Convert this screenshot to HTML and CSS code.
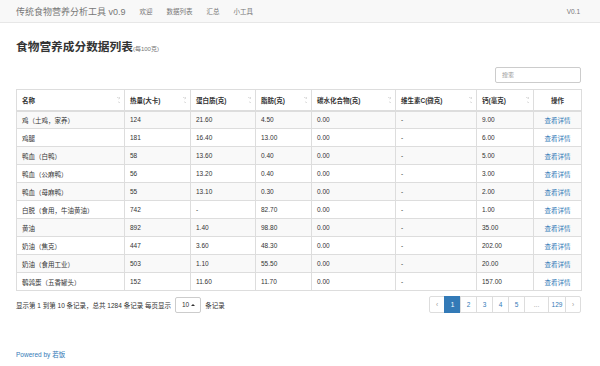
FILE: index.html
```html
<!DOCTYPE html>
<html lang="zh">
<head>
<meta charset="utf-8">
<title>传统食物营养分析工具</title>
<link rel="stylesheet" href="styles.css">
</head>
<body>
<nav class="navbar">
  <div class="nav-left">
    <span class="brand">传统食物营养分析工具 v0.9</span>
    <a class="nav-link">欢迎</a>
    <a class="nav-link">数据列表</a>
    <a class="nav-link">汇总</a>
    <a class="nav-link">小工具</a>
  </div>
  <span class="nav-link version">V0.1</span>
</nav>
<main class="container">
  <h1 class="title">食物营养成分数据列表<small>(每100克)</small></h1>
  <div class="toolbar">
    <div class="search">搜索</div>
  </div>
  <table class="data">
    <colgroup>
      <col style="width:108px"><col style="width:66px"><col style="width:65px"><col style="width:56px">
      <col style="width:84px"><col style="width:81px"><col style="width:57px"><col style="width:48px">
    </colgroup>
    <thead>
      <tr>
        <th><span>名称</span><i class="sort"></i></th>
        <th><span>热量(大卡)</span><i class="sort"></i></th>
        <th><span>蛋白质(克)</span><i class="sort"></i></th>
        <th><span>脂肪(克)</span><i class="sort"></i></th>
        <th><span>碳水化合物(克)</span><i class="sort"></i></th>
        <th><span>维生素C(微克)</span><i class="sort"></i></th>
        <th><span>钙(毫克)</span><i class="sort"></i></th>
        <th class="center">操作</th>
      </tr>
    </thead>
    <tbody>
      <tr><td>鸡（土鸡，家养）</td><td>124</td><td>21.60</td><td>4.50</td><td>0.00</td><td>-</td><td>9.00</td><td class="center"><a>查看详情</a></td></tr>
      <tr><td>鸡腿</td><td>181</td><td>16.40</td><td>13.00</td><td>0.00</td><td>-</td><td>6.00</td><td class="center"><a>查看详情</a></td></tr>
      <tr><td>鸭血（白鸭）</td><td>58</td><td>13.60</td><td>0.40</td><td>0.00</td><td>-</td><td>5.00</td><td class="center"><a>查看详情</a></td></tr>
      <tr><td>鸭血（公麻鸭）</td><td>56</td><td>13.20</td><td>0.40</td><td>0.00</td><td>-</td><td>3.00</td><td class="center"><a>查看详情</a></td></tr>
      <tr><td>鸭血（母麻鸭）</td><td>55</td><td>13.10</td><td>0.30</td><td>0.00</td><td>-</td><td>2.00</td><td class="center"><a>查看详情</a></td></tr>
      <tr><td>白脱（食用，牛油黄油）</td><td>742</td><td>-</td><td>82.70</td><td>0.00</td><td>-</td><td>1.00</td><td class="center"><a>查看详情</a></td></tr>
      <tr><td>黄油</td><td>892</td><td>1.40</td><td>98.80</td><td>0.00</td><td>-</td><td>35.00</td><td class="center"><a>查看详情</a></td></tr>
      <tr><td>奶油（焦克）</td><td>447</td><td>3.60</td><td>48.30</td><td>0.00</td><td>-</td><td>202.00</td><td class="center"><a>查看详情</a></td></tr>
      <tr><td>奶油（食用工业）</td><td>503</td><td>1.10</td><td>55.50</td><td>0.00</td><td>-</td><td>20.00</td><td class="center"><a>查看详情</a></td></tr>
      <tr><td>鹌鹑蛋（五香罐头）</td><td>152</td><td>11.60</td><td>11.70</td><td>0.00</td><td>-</td><td>157.00</td><td class="center"><a>查看详情</a></td></tr>
    </tbody>
  </table>
  <div class="pager-row">
    <div class="summary">
      <span>显示第 1 到第 10 条记录，总共 1284 条记录 每页显示</span>
      <span class="size-btn">10 <i class="caret"></i></span>
      <span>条记录</span>
    </div>
    <ul class="pagination">
      <li class="edge">‹</li>
      <li class="active">1</li>
      <li>2</li>
      <li>3</li>
      <li>4</li>
      <li>5</li>
      <li class="dots">...</li>
      <li class="wide">129</li>
      <li class="edge">›</li>
    </ul>
  </div>
  <footer class="footer"><a>Powered by 若饭</a></footer>
</main>
</body>
</html>
```
FILE: styles.css
```css
* { box-sizing: border-box; }
html, body { margin: 0; padding: 0; }
body {
  font-family: "Liberation Sans", Arial, "Noto Sans CJK SC", sans-serif;
  font-size: 6.5px;
  color: #333;
  background: #fff;
  width: 600px;
}
a { color: #337ab7; text-decoration: none; }

.navbar {
  height: 23px;
  background: #f8f8f8;
  border-bottom: 1px solid #e7e7e7;
  display: flex;
  align-items: center;
  justify-content: space-between;
  padding: 0 20px 0 16px;
}
.nav-left { display: flex; align-items: center; }
.brand { font-size: 9px; color: #777; padding-right: 7px; }
.nav-link { color: #777; padding: 0 7px; font-size: 6.5px; }
.version { padding: 0; }

.container { padding: 0 19px 0 16px; }
.title {
  margin: 17px 0 0;
  font-size: 11.7px;
  font-weight: 700;
  line-height: 14px;
  color: #333;
}
.title small { font-size: 6px; font-weight: 400; color: #777; }

.toolbar { display: flex; justify-content: flex-end; margin-top: 11px; }
.search {
  width: 86px;
  height: 16px;
  border: 1px solid #ccc;
  border-radius: 2px;
  color: #999;
  padding: 0 6px;
  line-height: 14px;
  font-size: 6px;
}

.data {
  margin-top: 6px;
  width: 565px;
  border-collapse: collapse;
  table-layout: fixed;
  border: 1px solid #ddd;
}
.data th, .data td {
  border: 1px solid #ddd;
  text-align: left;
  padding: 0 5px;
  white-space: nowrap;
  overflow: hidden;
}
.data th {
  height: 21px;
  font-weight: 700;
  border-bottom: 2px solid #ddd;
  position: relative;
}
.data td { height: 18px; }
.data tbody tr:nth-child(odd) { background: #f9f9f9; }
.data .center { text-align: center; }
.sort {
  position: absolute;
  right: 4px;
  top: 7px;
  width: 3px;
  height: 6px;
  background:
    linear-gradient(to top right, transparent 50%, #ddd 50%) 0 0 / 1.5px 2.5px no-repeat,
    linear-gradient(to top left, transparent 50%, #ddd 50%) 1.5px 0 / 1.5px 2.5px no-repeat,
    linear-gradient(to bottom right, transparent 50%, #ddd 50%) 0 3.5px / 1.5px 2.5px no-repeat,
    linear-gradient(to bottom left, transparent 50%, #ddd 50%) 1.5px 3.5px / 1.5px 2.5px no-repeat;
}

.pager-row {
  display: flex;
  justify-content: space-between;
  align-items: center;
  margin-top: 5px;
}
.summary { display: flex; align-items: center; gap: 3px; }
.size-btn {
  display: inline-flex;
  align-items: center;
  gap: 2px;
  height: 16px;
  padding: 0 5px 0 6px;
  border: 1px solid #ccc;
  border-radius: 2px;
  margin: 0 1px;
}
.caret {
  width: 0; height: 0;
  border-left: 2px solid transparent;
  border-right: 2px solid transparent;
  border-bottom: 2px solid #333;
}
.pagination {
  display: flex;
  list-style: none;
  margin: 0;
  padding: 0;
}
.pagination li {
  width: 17px;
  height: 17px;
  line-height: 15px;
  text-align: center;
  color: #337ab7;
  border: 1px solid #ddd;
  margin-left: -1px;
  background: #fff;
}
.pagination li.edge { width: 16px; color: #999; }
.pagination li:first-child { border-radius: 2px 0 0 2px; margin-left: 0; }
.pagination li:last-child { border-radius: 0 2px 2px 0; }
.pagination li.active { background: #337ab7; border-color: #337ab7; color: #fff; }
.pagination li.dots { width: 25px; color: #999; }
.pagination li.wide { width: 18px; }

.footer { margin-top: 36px; }
```
